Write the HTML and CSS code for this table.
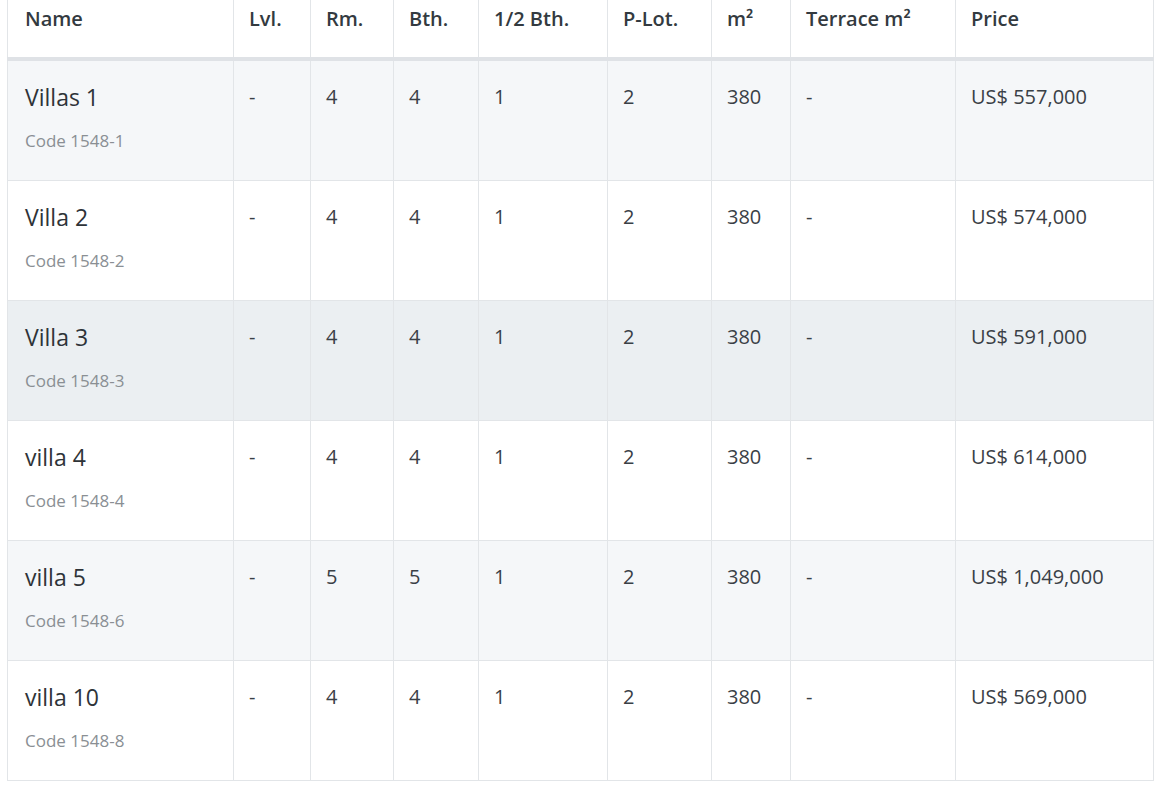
FILE: index.html
```html
<!DOCTYPE html>
<html>
<head>
<meta charset="utf-8">
<link rel="stylesheet" href="styles.css">
</head>
<body>
<div class="wrap">
<table class="units">
  <colgroup>
    <col class="c-name"><col class="c-lvl"><col class="c-rm"><col class="c-bth"><col class="c-half"><col class="c-lot"><col class="c-m2"><col class="c-ter"><col class="c-price">
  </colgroup>
  <thead>
    <tr><th>Name</th><th>Lvl.</th><th>Rm.</th><th>Bth.</th><th>1/2 Bth.</th><th>P-Lot.</th><th>m²</th><th>Terrace m²</th><th>Price</th></tr>
  </thead>
  <tbody>
    <tr class="odd"><td><div class="nm">Villas 1</div><div class="code">Code 1548-1</div></td><td>-</td><td>4</td><td>4</td><td>1</td><td>2</td><td>380</td><td>-</td><td>US$ 557,000</td></tr>
    <tr><td><div class="nm">Villa 2</div><div class="code">Code 1548-2</div></td><td>-</td><td>4</td><td>4</td><td>1</td><td>2</td><td>380</td><td>-</td><td>US$ 574,000</td></tr>
    <tr class="hover"><td><div class="nm">Villa 3</div><div class="code">Code 1548-3</div></td><td>-</td><td>4</td><td>4</td><td>1</td><td>2</td><td>380</td><td>-</td><td>US$ 591,000</td></tr>
    <tr><td><div class="nm">villa 4</div><div class="code">Code 1548-4</div></td><td>-</td><td>4</td><td>4</td><td>1</td><td>2</td><td>380</td><td>-</td><td>US$ 614,000</td></tr>
    <tr class="odd"><td><div class="nm">villa 5</div><div class="code">Code 1548-6</div></td><td>-</td><td>5</td><td>5</td><td>1</td><td>2</td><td>380</td><td>-</td><td>US$ 1,049,000</td></tr>
    <tr><td><div class="nm">villa 10</div><div class="code">Code 1548-8</div></td><td>-</td><td>4</td><td>4</td><td>1</td><td>2</td><td>380</td><td>-</td><td>US$ 569,000</td></tr>
  </tbody>
</table>
</div>
</body>
</html>
```
FILE: styles.css
```css
html, body { margin: 0; padding: 0; background: #fff; }
body { font-family: "Open Sans", "Noto Sans", sans-serif; color: #333a40; overflow: hidden; }
.wrap { padding: 0 17px 0 7px; margin-top: -18px; }
.units { width: 1146px; table-layout: fixed; border-collapse: collapse; }
.c-name { width: 226px; }
.c-lvl { width: 77px; }
.c-rm { width: 83px; }
.c-bth { width: 85px; }
.c-half { width: 129px; }
.c-lot { width: 104px; }
.c-m2 { width: 79px; }
.c-ter { width: 165px; }
.c-price { width: 198px; }
.units th, .units td { border: 1px solid #e2e5e8; text-align: left; vertical-align: top; padding: 22px 14px 0 15px; }
.units th { font-weight: 600; font-size: 20px; line-height: 28px; padding-bottom: 24px; color: #333a40; border-bottom: 4px solid #dfe2e6; }
.units td { font-size: 20px; line-height: 28px; height: 97px; color: #3a4046; }
.units td:first-child, .units th:first-child { padding-left: 17px; }
.units td:first-child { padding-top: 20px; height: 99px; }
.units tr.odd td { background: #f5f7f9; }
.units tr.hover td { background: #ebeff2; }
.nm { font-size: 23px; line-height: 32px; color: #2e3338; }
.code { font-size: 17px; line-height: 25px; margin-top: 15px; color: #8a8f94; }
```
